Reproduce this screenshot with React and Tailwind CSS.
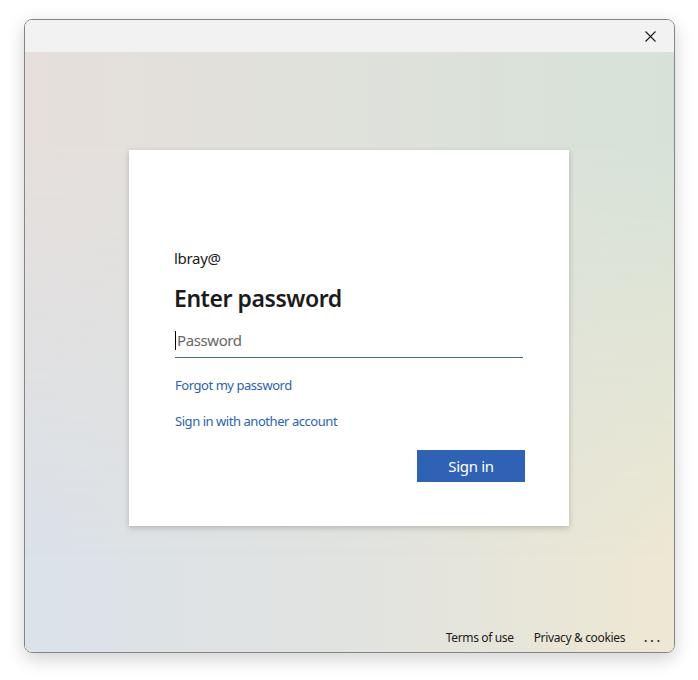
export default function App() {
  const font = { fontFamily: '"Segoe UI", "Noto Sans", "Open Sans", sans-serif' };
  return (
    <div className="w-[698px] h-[680px] bg-white pt-[19px] pl-[24px]" style={font}>
      <div className="w-[651px] h-[634px] rounded-[8px] border border-[#858585] overflow-hidden flex flex-col shadow-[0_6px_18px_rgba(0,0,0,0.18)]">
        <div className="h-[32px] bg-[#f2f2f2] flex items-center justify-end pr-[18px] shrink-0">
          <svg width="11" height="11" viewBox="0 0 11 11" className="mt-[1px]">
            <path d="M0.5 0.5 L10.5 10.5 M10.5 0.5 L0.5 10.5" stroke="#1a1a1a" strokeWidth="1.1" fill="none" />
          </svg>
        </div>
        <div className="relative flex-1 flex flex-col bg-[linear-gradient(to_right,#dbe2ea,#e1e3e0_50%,#eee8d3)]">
          <div className="absolute inset-0 bg-[linear-gradient(to_right,#e6dfdb,#dfe1db_50%,#d6e2d8)] [mask-image:linear-gradient(to_bottom,black,black_15%,transparent_85%)]" />
          <div className="relative flex-1 flex flex-col items-start pt-[98px] pl-[104px]">
            <div className="w-[440px] h-[376px] bg-white shadow-[0_2px_6px_rgba(0,0,0,0.2)] pl-[45px] pr-[44px] pt-[100px]">
              <div className="text-[15px] leading-[16px] text-[#1b1b1b] tracking-[-0.3px]">lbray@</div>
              <h1 className="mt-[18px] text-[23px] leading-[28px] font-semibold text-[#1b1b1b] tracking-[-0.45px]">Enter password</h1>
              <div className="mt-[15px] ml-[1px] mr-[2px] h-[31px] border-b border-[#4a6696] flex items-center pb-[3px]">
                <div className="w-[1px] h-[19px] bg-black" />
                <span className="text-[15px] text-[#666666] pl-[1px] tracking-[-0.4px]">Password</span>
              </div>
              <div className="mt-[18px] ml-[1px] text-[13px] leading-[18px] text-[#2c62b3] tracking-[-0.45px]">Forgot my password</div>
              <div className="mt-[18px] ml-[1px] text-[13px] leading-[18px] text-[#2c62b3] tracking-[-0.45px]">Sign in with another account</div>
              <div className="mt-[20px] flex justify-end">
                <button className="w-[108px] h-[32px] bg-[#2f62b4] text-white text-[15px] tracking-[-0.3px]">Sign in</button>
              </div>
            </div>
          </div>
          <div className="relative h-[28px] flex items-center justify-end pr-[11px] text-[12px] text-[#1b1b1b] tracking-[-0.35px]">
            <span>Terms of use</span>
            <span className="ml-[20px]">Privacy &amp; cookies</span>
            <span className="ml-[19px] tracking-[3px] font-semibold">...</span>
          </div>
        </div>
      </div>
    </div>
  );
}
